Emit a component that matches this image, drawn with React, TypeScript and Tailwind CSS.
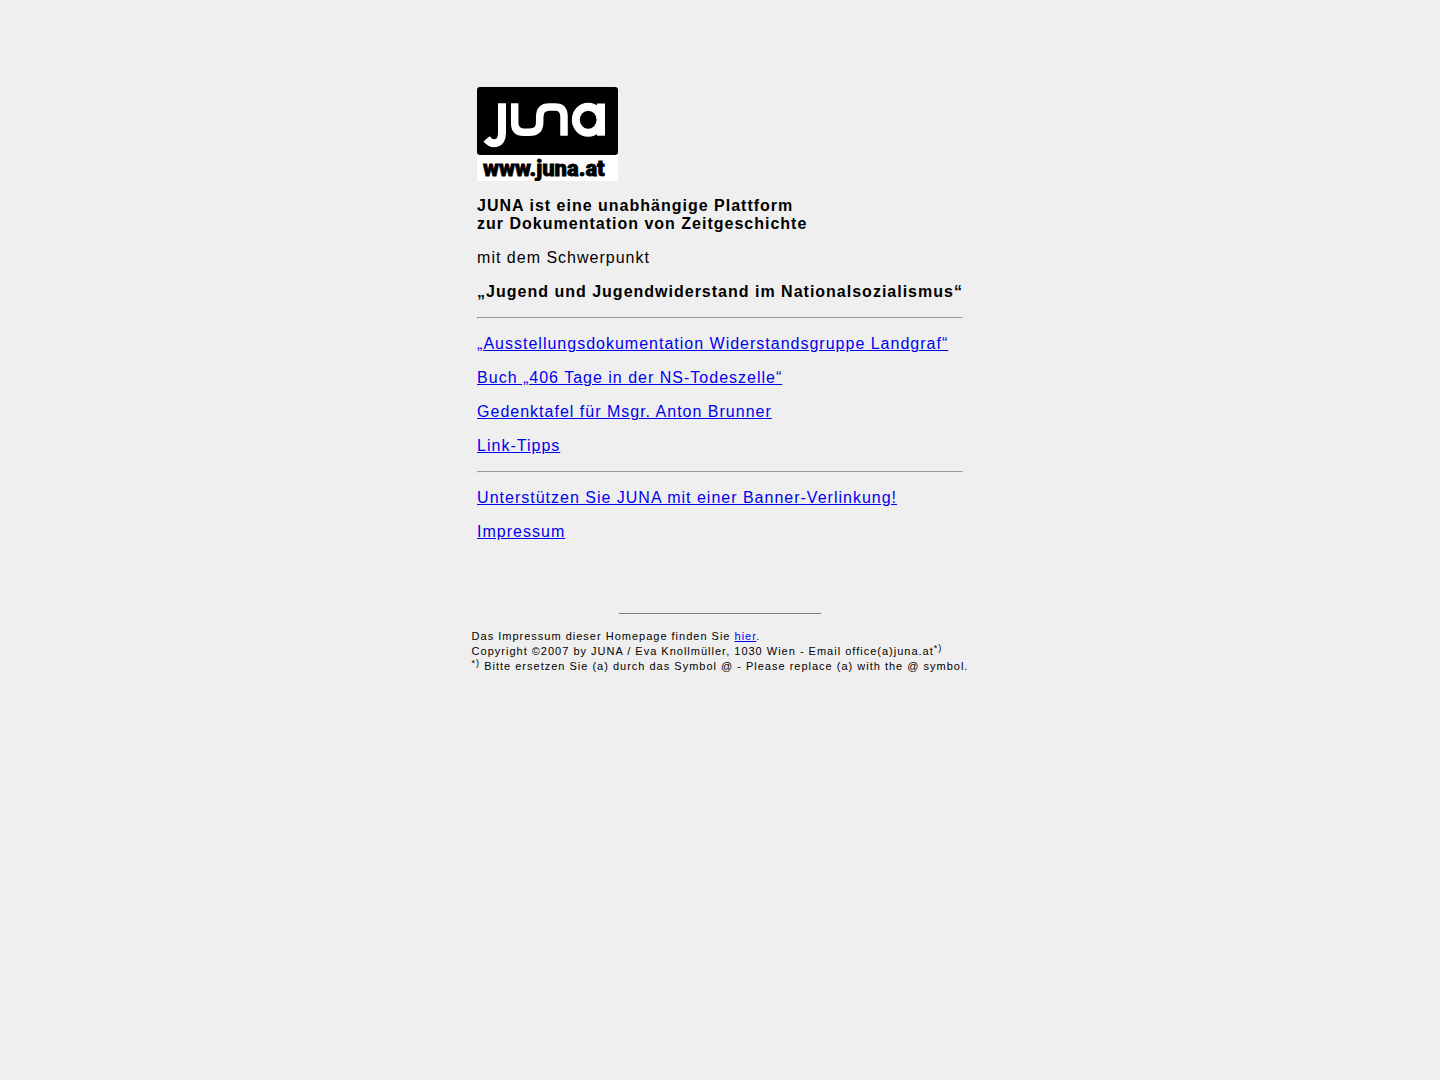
function Logo() {
  return (
    <svg
      role="img"
      aria-label="JUNA – www.juna.at"
      viewBox="0 0 141 94"
      className="block h-[94px] w-[141px]"
    >
      <path d="M0 60h141v34H0z" fill="#fff" />
      <rect width="141" height="68" rx="3" fill="#000" />
      <g fill="none" stroke="#fff" strokeWidth="8">
        <path d="M25 16.300V45.500C25 58 15.500 58.800 9.500 51.800" />
        <path
          d="M37.700 16.300V36q0 9.200 9 9.200h5.500c7.500 0 10.500-3 10.500-10v-5q0-10.200 9.500-10.200h6q8.800 0 8.800 9.500v19.200"
          strokeWidth="7.500"
        />
        <ellipse cx="111.200" cy="32.700" rx="12.400" ry="13" />
        <path d="M124 16.500v32.200" />
      </g>
      <text
        x="6"
        y="89"
        fill="#000"
        stroke="#000"
        strokeWidth="0.8"
        className="font-['Roboto',sans-serif] text-[22px] font-black tracking-normal"
      >
        www.juna.at
      </text>
    </svg>
  );
}

const link = "text-[#0000ee] underline";

const topics = [
  "„Ausstellungsdokumentation Widerstandsgruppe Landgraf“",
  "Buch „406 Tage in der NS-Todeszelle“",
  "Gedenktafel für Msgr. Anton Brunner",
  "Link-Tipps",
];

const service = ["Unterstützen Sie JUNA mit einer Banner-Verlinkung!", "Impressum"];

function Links({ items }: { items: string[] }) {
  return (
    <>
      {items.map((item) => (
        <p key={item}>
          <a href="#" className={link}>
            {item}
          </a>
        </p>
      ))}
    </>
  );
}

function Rule() {
  return <hr className="border border-t-[#9a9a9a] border-r-[#eeeeee] border-b-[#eeeeee] border-l-[#9a9a9a]" />;
}

export default function App() {
  return (
    <div className="flex min-h-screen flex-col items-center bg-[#efefef] pt-[87px] font-['Liberation_Sans',Arial,sans-serif] tracking-[1px] text-black">
      <main className="flex flex-col gap-4 text-base leading-[18px]">
        <Logo />
        <h1 className="font-bold">
          JUNA ist eine unabhängige Plattform
          <br />
          zur Dokumentation von Zeitgeschichte
        </h1>
        <p>mit dem Schwerpunkt</p>
        <p className="font-bold">„Jugend und Jugendwiderstand im Nationalsozialismus“</p>
        <Rule />
        <Links items={topics} />
        <Rule />
        <Links items={service} />
      </main>
      <hr className="mt-[72px] w-[202px] border-t border-[#808080]" />
      <footer className="mt-[15px] text-[11px] leading-[15px]">
        <p>
          Das Impressum dieser Homepage finden Sie{" "}
          <a href="#" className={link}>
            hier
          </a>
          .
        </p>
        <p>
          Copyright ©2007 by JUNA / Eva Knollmüller, 1030 Wien - Email office(a)juna.at
          <sup className="text-[9px]">*)</sup>
        </p>
        <p>
          <sup className="text-[9px]">*)</sup> Bitte ersetzen Sie (a) durch das Symbol @ - Please replace (a) with the @
          symbol.
        </p>
      </footer>
    </div>
  );
}
